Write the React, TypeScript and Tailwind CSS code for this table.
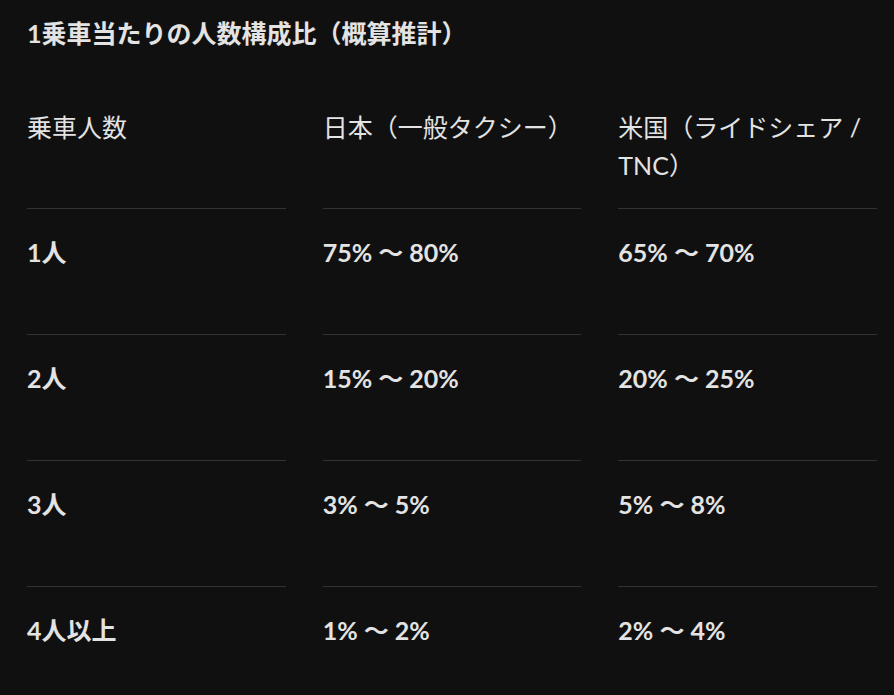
import React from "react";

const font = { fontFamily: 'Lato, "Noto Sans CJK JP", sans-serif' };

const rows = [
  ["1人", "75% ～ 80%", "65% ～ 70%"],
  ["2人", "15% ～ 20%", "20% ～ 25%"],
  ["3人", "3% ～ 5%", "5% ～ 8%"],
  ["4人以上", "1% ～ 2%", "2% ～ 4%"],
];

export default function App() {
  return (
    <div
      className="min-h-[695px] w-full bg-[#101010] text-[#e3e3e3] pl-[27px] pt-[14px] overflow-hidden"
      style={font}
    >
      <h1 className="text-[25px] leading-[38px] font-bold">1乗車当たりの人数構成比（概算推計）</h1>
      <div className="mt-[56px] grid w-[850px] grid-cols-3 gap-x-[37px]">
        <div className="text-[25px] leading-[38px] pb-[24px] border-b border-[#333333]">乗車人数</div>
        <div className="text-[25px] leading-[38px] pb-[24px] border-b border-[#333333]">日本（一般タクシー）</div>
        <div className="text-[25px] leading-[38px] pb-[24px] border-b border-[#333333]">米国（ライドシェア / TNC）</div>
        {rows.map((r, i) => (
          <React.Fragment key={i}>
            {r.map((c, j) => (
              <div
                key={j}
                className="text-[25px] leading-[38px] font-bold pt-[24px] pb-[63px] border-b border-[#333333]"
              >
                {c}
              </div>
            ))}
          </React.Fragment>
        ))}
      </div>
    </div>
  );
}
